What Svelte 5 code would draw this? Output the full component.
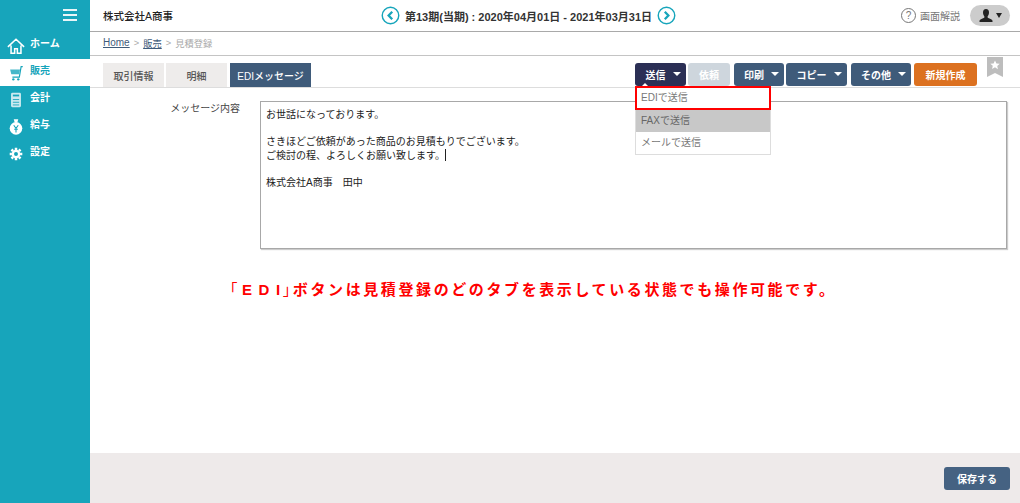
<script lang="ts">
	const nav = [
		{ id: 'home', label: 'ホーム' },
		{ id: 'cart', label: '販売', active: true },
		{ id: 'calc', label: '会計' },
		{ id: 'pay', label: '給与' },
		{ id: 'gear', label: '設定' }
	];
	const tabs = ['取引情報', '明細', 'EDIメッセージ'];
	const before = `お世話になっております。

さきほどご依頼があった商品のお見積もりでございます。
ご検討の程、よろしくお願い致します。`;
	const after = `

株式会社A商事　田中`;
</script>

<div class="page">
	<aside class="side">
		<div class="burger"><span></span><span></span><span></span></div>
		<ul>
			{#each nav as item}
				<li class:active={item.active}>
					<svg viewBox="0 0 20 20" width="18" height="18" fill="none" stroke="currentColor">
						{#if item.id === 'home'}
							<path d="M1 11 10 2.500l9 8.500M4.500 9.500V18h4v-5h3v5h4V9.500" stroke-width="1.700" />
						{:else if item.id === 'cart'}
							<path d="M17.500 3h-1.800l-2 11.500H6" stroke-width="1.300" />
							<path d="M3.500 6h11l-1 5.500H4.800z" fill="currentColor" stroke="none" opacity="0.8" />
							<circle cx="7" cy="17" r="1.300" fill="currentColor" stroke="none" />
							<circle cx="12.500" cy="17" r="1.300" fill="currentColor" stroke="none" />
						{:else if item.id === 'calc'}
							<rect x="4.500" y="2" width="11" height="16" rx="1.500" fill="#cdeaf0" stroke="none" />
							<path d="M6.500 5h7" stroke="#17a5bb" stroke-width="2" />
							<path d="M6.500 9.500h7M6.500 12.500h7M6.500 15.500h7" stroke="#17a5bb" stroke-width="1" />
						{:else if item.id === 'pay'}
							<path d="M7.500 1.500h5L11.500 5h-3z" fill="currentColor" stroke="none" />
							<circle cx="10" cy="11.500" r="7" fill="currentColor" stroke="none" />
							<path d="m7.500 8 2.500 3.500L12.500 8M10 11.500V16M8 12.500h4" stroke="#17a5bb" stroke-width="1.200" />
						{:else}
							<path d="M10 3v2.500M10 14.500V17M3 10h2.500M14.500 10H17M5 5l1.800 1.800M13.200 13.200 15 15M5 15l1.800-1.800M13.200 6.800 15 5" stroke-width="2.800" />
							<circle cx="10" cy="10" r="3.500" stroke-width="2.600" />
						{/if}
					</svg>
					<span>{item.label}</span>
				</li>
			{/each}
		</ul>
	</aside>

	<main class="main">
		<header class="top">
			<div class="company">株式会社A商事</div>
			<div class="period">
				<svg viewBox="0 0 20 20" width="19" height="19" fill="none" stroke="#17a5bb">
					<circle cx="10" cy="10" r="8.700" stroke-width="1.500" />
					<path d="M11.800 6 8 10l3.800 4" stroke-width="2.400" />
				</svg>
				<b>第13期(当期) : 2020年04月01日 - 2021年03月31日</b>
				<svg viewBox="0 0 20 20" width="19" height="19" fill="none" stroke="#17a5bb">
					<circle cx="10" cy="10" r="8.700" stroke-width="1.500" />
					<path d="M8.200 6 12 10l-3.800 4" stroke-width="2.400" />
				</svg>
			</div>
			<div class="help">
				<span class="q">?</span>
				<span>画面解説</span>
				<div class="user">
					<svg viewBox="0 0 14 14" width="14" height="14" fill="#222">
						<path d="M7 0c2 0 3 1.500 3 3.500S9 7 8.500 7.800c0 1 1 1.400 2.500 2 1.500.6 2.500 1 2.500 2.200v1H.5v-1c0-1.200 1-1.600 2.500-2.200s2.500-1 2.500-2C5 7 4 5.500 4 3.500S5 0 7 0z" />
					</svg>
					<i></i>
				</div>
			</div>
		</header>

		<nav class="crumbs">
			<a class="home" href="#home">Home</a><em>&gt;</em><a href="#sales">販売</a><em>&gt;</em><span>見積登録</span>
		</nav>

		<div class="toolbar">
			<div class="tabs">
				{#each tabs as tab, i}
					<div class="tab" class:current={i === 2}>{tab}</div>
				{/each}
			</div>
			<div class="actions">
				<div class="send-wrap">
					<button class="btn drop dark">送信<i></i></button>
					<div class="menu">
						<div class="item picked">EDIで送信</div>
						<div class="item hover">FAXで送信</div>
						<div class="item">メールで送信</div>
					</div>
				</div>
				<button class="btn off">依頼</button>
				<button class="btn drop print">印刷<i></i></button>
				<button class="btn drop copy">コピー<i></i></button>
				<button class="btn drop other">その他<i></i></button>
				<button class="btn orange">新規作成</button>
				<div class="bookmark">
					<svg viewBox="0 0 12 12" width="10" height="10" fill="#fff">
						<path d="m6 .5 1.700 3.600 3.900.5-2.900 2.700.8 3.900L6 8.800l-3.500 1.900.8-3.900L.4 4.600l3.900-.5z" />
					</svg>
				</div>
			</div>
		</div>

		<section class="body">
			<div class="field">
				<div class="label">メッセージ内容</div>
				<div class="box">
					<div class="text">{before}<span class="caret"></span>{after}</div>
				</div>
			</div>
			<p class="note"><span class="br open">「</span><span class="edi">ED</span>I<span class="br">」</span>ボタンは見積登録のどのタブを表示している状態でも操作可能です。</p>
		</section>

		<footer class="foot">
			<button class="btn save">保存する</button>
		</footer>
	</main>
</div>

<style>
	:global(body) {
		margin: 0;
		background: #fff;
	}
	* {
		box-sizing: border-box;
	}
	.page {
		display: flex;
		width: 1020px;
		height: 503px;
		overflow: hidden;
		font-family: 'Liberation Sans', 'Noto Sans CJK JP', sans-serif;
		font-size: 10px;
		color: #333;
	}
	.side {
		flex: 0 0 90px;
		background: #17a5bb;
		color: #fff;
	}
	.burger {
		display: flex;
		flex-direction: column;
		gap: 3px;
		align-items: flex-end;
		height: 32px;
		padding: 9px 13px 0 0;
	}
	.burger span {
		width: 14px;
		height: 2px;
		background: #fff;
		opacity: 0.9;
	}
	ul {
		list-style: none;
		margin: 0;
		padding: 0;
	}
	li {
		display: flex;
		align-items: flex-start;
		gap: 5px;
		height: 27px;
		padding: 5px 0 0 7px;
		font-size: 10px;
		font-weight: 700;
	}
	li span {
		line-height: 14px;
	}
	li.active {
		background: #fff;
		color: #17a5bb;
	}
	.main {
		flex: 1;
		display: flex;
		flex-direction: column;
		min-width: 0;
	}
	.top {
		display: flex;
		align-items: center;
		justify-content: space-between;
		height: 32px;
		padding: 0 10px 0 13px;
		border-bottom: 1px solid #a9a9a9;
	}
	.company {
		width: 277px;
		font-size: 10.500px;
		font-weight: 500;
		color: #222;
	}
	.period {
		display: flex;
		align-items: center;
		gap: 5px;
		font-size: 11px;
		white-space: nowrap;
		color: #333;
	}
	.help {
		display: flex;
		align-items: center;
		width: 333px;
		justify-content: flex-end;
		gap: 4px;
		color: #777;
	}
	.q {
		display: flex;
		align-items: center;
		justify-content: center;
		width: 15px;
		height: 15px;
		border: 1px solid #777;
		border-radius: 50%;
		font-size: 10px;
		line-height: 1;
	}
	.user {
		display: flex;
		align-items: center;
		justify-content: center;
		gap: 3px;
		width: 40px;
		height: 21px;
		margin-left: 6px;
		border-radius: 10.500px;
		background: #ccc;
	}
	.user i {
		border-top: 5px solid #222;
		border-left: 3px solid transparent;
		border-right: 3px solid transparent;
	}
	.crumbs {
		display: flex;
		align-items: center;
		height: 24px;
		padding: 0 0 2px 13px;
		border-bottom: 1px solid #c4c4c4;
		font-size: 9.300px;
		color: #aaa;
	}
	.crumbs a {
		color: #3f5b7a;
	}
	.crumbs .home {
		font-size: 10px;
	}
	.crumbs em {
		margin: 0 4px;
		font-style: normal;
	}
	.toolbar {
		display: flex;
		justify-content: space-between;
		height: 32px;
		padding: 7px 0 0 13px;
		border-bottom: 1px solid #ddd;
	}
	.tabs {
		display: flex;
		gap: 2px;
	}
	.tab {
		display: flex;
		align-items: center;
		justify-content: center;
		width: 61px;
		height: 24px;
		background: #eeeceb;
		color: #555;
		font-weight: 500;
	}
	.tab.current {
		width: 81px;
		margin-left: 1px;
		background: #3f5b7a;
		color: #fff;
	}
	.actions {
		display: flex;
		align-items: flex-start;
		padding-right: 17px;
	}
	.send-wrap {
		position: relative;
	}
	.btn {
		display: flex;
		align-items: center;
		justify-content: center;
		gap: 7px;
		width: 50px;
		height: 23px;
		padding: 0 0 1px;
		border: 0;
		border-radius: 3px;
		background: #3f5b7a;
		color: #fff;
		font: inherit;
		font-weight: 700;
		white-space: nowrap;
	}
	.btn.drop {
		padding-left: 5px;
	}
	.btn i {
		border-top: 4px solid #fff;
		border-left: 4px solid transparent;
		border-right: 4px solid transparent;
	}
	.btn.dark {
		position: relative;
		width: 51px;
		background: #2b2f55;
	}
	.btn.dark::after {
		content: '';
		position: absolute;
		left: 7px;
		bottom: 0;
		border-bottom: 3px solid #fff;
		border-left: 3px solid transparent;
		border-right: 3px solid transparent;
	}
	.btn.off {
		width: 42px;
		margin-left: 2px;
		background: #ced6dd;
	}
	.btn.print {
		margin-left: 4px;
	}
	.btn.copy {
		width: 61px;
		margin-left: 2px;
	}
	.btn.other {
		width: 60px;
		margin-left: 4px;
	}
	.btn.orange {
		width: 63px;
		margin-left: 3px;
		background: #dc7120;
	}
	.menu {
		position: absolute;
		left: 0;
		top: 23px;
		width: 136px;
		background: #fff;
		border: 1px solid #ddd;
		color: #777;
	}
	.item {
		display: flex;
		align-items: center;
		height: 22px;
		padding: 0 0 3px 5px;
	}
	.item.picked {
		outline: 2px solid #f00;
		outline-offset: -2px;
		height: 24px;
		margin: -1px -1px 0;
		padding-left: 6px;
	}
	.item.hover {
		background: #c8c8c8;
		color: #666;
	}
	.bookmark {
		display: flex;
		justify-content: center;
		align-items: flex-start;
		width: 16px;
		height: 20px;
		margin: -6px 0 0 10px;
		padding-top: 3px;
		background: #bdbdbd;
		clip-path: polygon(0 0, 100% 0, 100% 100%, 50% 80%, 0 100%);
	}
	.body {
		flex: 1;
		padding-top: 13px;
	}
	.field {
		display: flex;
		align-items: flex-start;
		gap: 20px;
		padding-right: 13px;
	}
	.label {
		width: 150px;
		margin-top: -1px;
		text-align: right;
		color: #444;
	}
	.box {
		flex: 1;
		height: 148px;
		border: 1px solid #a8a8a8;
		padding: 6px 5px 0;
		background: #fff;
		box-shadow: 1px 1px 1px #ccc;
	}
	.text {
		white-space: pre-wrap;
		line-height: 13.500px;
		color: #222;
	}
	.caret {
		display: inline-block;
		width: 1px;
		height: 12px;
		vertical-align: -2px;
		background: #222;
	}
	.note {
		margin: 32px 0 0 140px;
		color: #f00;
		font-size: 15px;
		font-weight: 700;
		letter-spacing: 2.600px;
		line-height: 18px;
		white-space: nowrap;
	}
	.br {
		font-feature-settings: 'halt';
		font-weight: 400;
	}
	.br.open {
		margin-right: 2px;
	}
	.edi {
		letter-spacing: 6.500px;
	}
	.foot {
		display: flex;
		justify-content: flex-end;
		align-items: flex-start;
		height: 50px;
		padding: 14px 10px 0 0;
		background: #eeeaea;
	}
	.btn.save {
		width: 66px;
		background: #456282;
	}
</style>
